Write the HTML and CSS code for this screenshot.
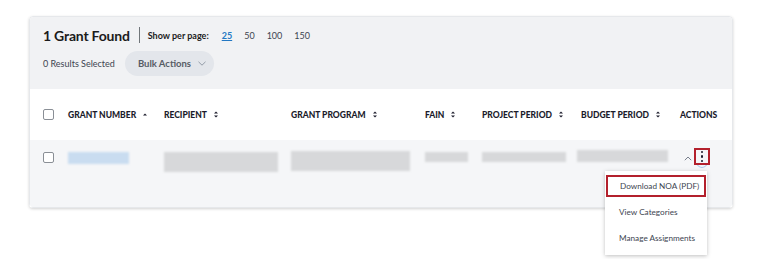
FILE: index.html
```html
<!DOCTYPE html>
<html lang="en">
<head>
<meta charset="utf-8">
<title>Grants</title>
<link rel="stylesheet" href="styles.css">
</head>
<body>
<div class="page">
  <div class="card">
    <div class="toolbar">
      <div class="toolbar-row">
        <h2 class="title">1 Grant Found</h2>
        <span class="divider"></span>
        <span class="per-label">Show per page:</span>
        <a class="per active">25</a>
        <a class="per">50</a>
        <a class="per">100</a>
        <a class="per">150</a>
      </div>
      <div class="toolbar-row row2">
        <span class="selected">0 Results Selected</span>
        <button class="bulk">Bulk Actions
          <svg class="chev" width="8" height="5" viewBox="0 0 8 5"><path d="M0.5 0.8 L4 4.2 L7.5 0.8" fill="none" stroke="#8a93a0" stroke-width="0.9"/></svg>
        </button>
      </div>
    </div>
    <div class="table">
      <div class="trow thead">
        <div class="cell"><span class="cb"></span></div>
        <div class="cell">GRANT NUMBER <svg class="sort" width="6" height="9" viewBox="0 0 6 9"><path d="M1 5.5 L3 3.5 L5 5.5 Z" fill="#1b1b2b"/></svg></div>
        <div class="cell">RECIPIENT <svg class="sort" width="6" height="9" viewBox="0 0 6 9"><path d="M1 3.6 L3 1.6 L5 3.6 Z M1 5.4 L3 7.4 L5 5.4 Z" fill="#1b1b2b"/></svg></div>
        <div class="cell">GRANT PROGRAM <svg class="sort" width="6" height="9" viewBox="0 0 6 9"><path d="M1 3.6 L3 1.6 L5 3.6 Z M1 5.4 L3 7.4 L5 5.4 Z" fill="#1b1b2b"/></svg></div>
        <div class="cell">FAIN <svg class="sort" width="6" height="9" viewBox="0 0 6 9"><path d="M1 3.6 L3 1.6 L5 3.6 Z M1 5.4 L3 7.4 L5 5.4 Z" fill="#1b1b2b"/></svg></div>
        <div class="cell">PROJECT PERIOD <svg class="sort" width="6" height="9" viewBox="0 0 6 9"><path d="M1 3.6 L3 1.6 L5 3.6 Z M1 5.4 L3 7.4 L5 5.4 Z" fill="#1b1b2b"/></svg></div>
        <div class="cell">BUDGET PERIOD <svg class="sort" width="6" height="9" viewBox="0 0 6 9"><path d="M1 3.6 L3 1.6 L5 3.6 Z M1 5.4 L3 7.4 L5 5.4 Z" fill="#1b1b2b"/></svg></div>
        <div class="cell">ACTIONS</div>
      </div>
      <div class="trow tbody">
        <div class="cell"><span class="cb"></span></div>
        <div class="cell"><span class="blur blue" style="width:61px;height:12px"></span></div>
        <div class="cell"><span class="blur" style="width:114px;height:20px"></span></div>
        <div class="cell"><span class="blur" style="width:119px;height:20px;margin-top:-1px"></span></div>
        <div class="cell"><span class="blur" style="width:43px;height:10px"></span></div>
        <div class="cell"><span class="blur" style="width:84px;height:10px"></span></div>
        <div class="cell"><span class="blur" style="width:91px;height:12px;margin-left:-4px;margin-top:-2px"></span></div>
        <div class="cell actions">
          <svg class="caret" width="8" height="5" viewBox="0 0 8 5"><path d="M0.8 4.2 L4 1 L7.2 4.2" fill="none" stroke="#6b7280" stroke-width="0.9"/></svg>
          <span class="kebab-wrap">
            <span class="ring"></span>
            <button class="kebab"><span></span><span></span><span></span></button>
          </span>
        </div>
      </div>
    </div>
  </div>
  <div class="menu-anchor">
    <div class="menu">
      <div class="item hl">Download NOA (PDF)</div>
      <div class="item">View Categories</div>
      <div class="item">Manage Assignments</div>
    </div>
  </div>
</div>
</body>
</html>
```
FILE: styles.css
```css
* { box-sizing: border-box; }
html, body {
  min-height: 100%;
}
body {
  margin: 0;
  background: #fff;
  font-family: Lato, "Noto Sans", sans-serif;
  color: #1b1b1b;
  min-height: 259px;
}
.page {
  position: relative;
  padding: 16px 35px 60px 29px;
}
.card {
  border-radius: 4px;
  box-shadow: 0 1px 3px rgba(0,0,0,0.18);
  border: 1px solid #e6e8eb;
}
.toolbar {
  background: #f1f2f4;
  height: 72px;
  padding: 7px 14px 0 13px;
  border-radius: 4px 4px 0 0;
}
.toolbar-row {
  display: flex;
  align-items: center;
  height: 22px;
}
.row2 {
  margin-top: 4px;
  height: 26px;
}
.title {
  margin: 0;
  font-size: 14px;
  letter-spacing: -0.2px;
  font-weight: 700;
  color: #1b1b1b;
}
.divider {
  width: 1px;
  height: 16px;
  background: #71767a;
  margin: 0 8px 0 9px;
}
.per-label {
  font-size: 9px;
  font-weight: 700;
  color: #1b1b1b;
  margin-right: 13px;
}
.per {
  font-size: 9px;
  color: #3d4551;
  margin-right: 12px;
}
.per.active {
  color: #2378c3;
  font-weight: 700;
  text-decoration: underline;
}
.selected {
  font-size: 9px;
  color: #3d4551;
}
.bulk {
  margin-left: 10px;
  height: 25px;
  width: 89px;
  border: none;
  border-radius: 13px;
  background: #e3e6eb;
  font-family: inherit;
  font-size: 9.5px;
  font-weight: 700;
  color: #565c65;
  display: flex;
  align-items: center;
  padding: 0 0 0 13px;
  gap: 7px;
}
.table {
  background: #fff;
}
.trow {
  display: grid;
  grid-template-columns: 25px 96px 127px 134px 57px 99px 99px 1fr;
  padding-left: 13px;
}
.thead {
  height: 51px;
  align-items: center;
}
.thead .cell {
  font-size: 8.5px;
  font-weight: 900;
  color: #1b1b2b;
  display: flex;
  align-items: center;
  white-space: nowrap;
}
.sort {
  margin-left: 6px;
}
.tbody {
  background: #f5f6f8;
  height: 67px;
  padding-top: 12px;
  border-radius: 0 0 3px 3px;
}
.tbody .cell {
  display: flex;
  align-items: flex-start;
}
.cb {
  display: inline-block;
  width: 11px;
  height: 11px;
  border: 1px solid #8a8f96;
  border-radius: 2px;
  background: #fff;
}
.blur {
  display: inline-block;
  background: #d7d8da;
  filter: blur(1px);
}
.blur.blue {
  background: #c9dcf0;
}
.actions {
  padding-left: 4px;
}
.caret {
  margin-top: 4px;
}
.kebab-wrap {
  position: relative;
  margin-left: 2px;
  margin-top: -4px;
}
.ring {
  position: absolute;
  left: 1px;
  top: 2px;
  width: 14px;
  height: 18px;
  border-radius: 50%;
  border: 1.5px solid #a9c6ea;
}
.kebab {
  position: relative;
  width: 16px;
  height: 17px;
  border: 2px solid #b3202c;
  background: #f5f6f8;
  padding: 0;
  display: flex;
  flex-direction: column;
  align-items: center;
  justify-content: center;
  gap: 2px;
}
.kebab span {
  width: 2.5px;
  height: 2.5px;
  border-radius: 50%;
  background: #1b1b2b;
}
.menu-anchor {
  position: absolute;
  left: 605px;
  top: 171px;
  z-index: 5;
}
.menu {
  width: 102px;
  background: #fff;
  box-shadow: 0 1px 4px rgba(0,0,0,0.25);
  padding: 4px 1px 2px;
}
.item {
  font-size: 8.2px;
  color: #3d4551;
  height: 26px;
  line-height: 22px;
  padding-left: 13px;
  white-space: nowrap;
}
.item.hl {
  height: 22px;
  border: 2px solid #b3202c;
  line-height: 18px;
  padding-left: 12px;
  margin-bottom: 4px;
}
```
